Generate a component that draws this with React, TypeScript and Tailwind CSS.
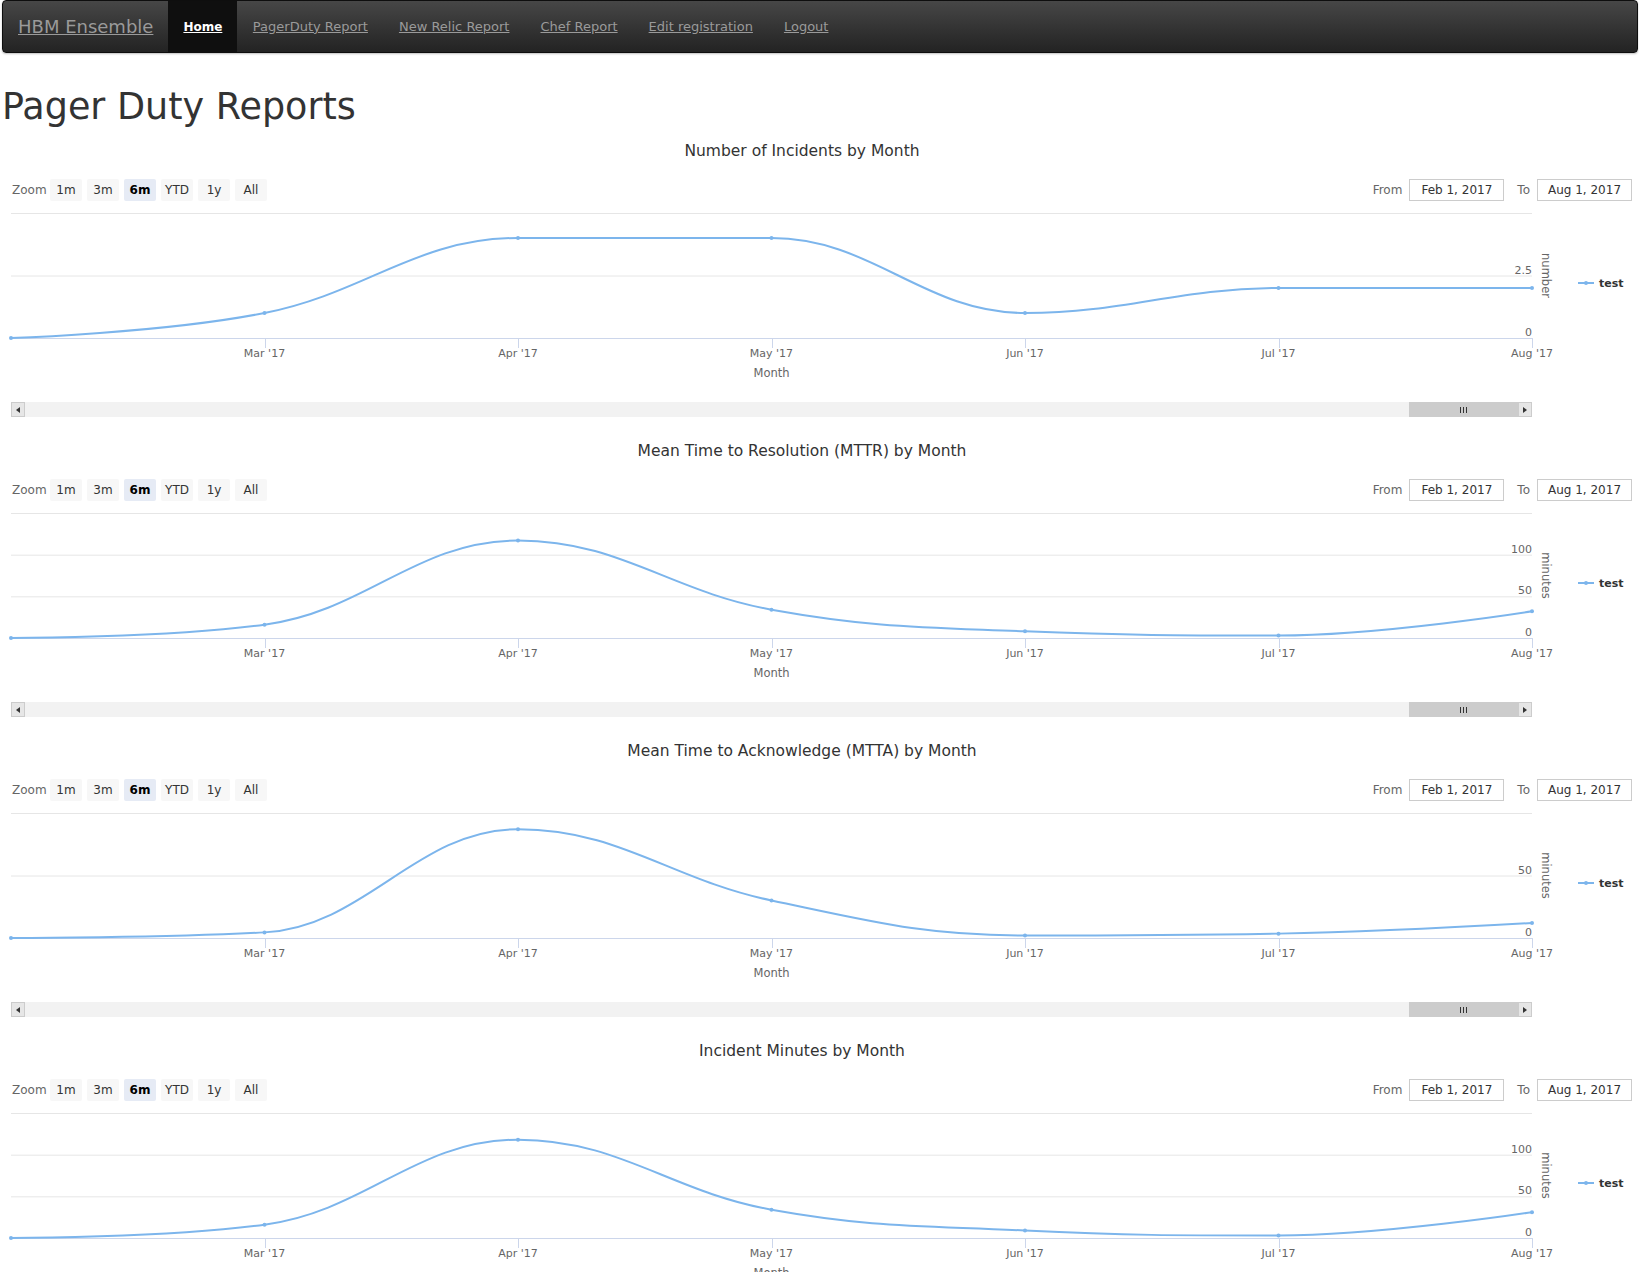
import React from 'react';

type ChartDef = {
  title: string;
  data: number[];
  max: number;
  labels: number[];
  axis: string;
};

const CHARTS: ChartDef[] = [
  { title: 'Number of Incidents by Month', data: [0, 1, 4, 4, 1, 2, 2], max: 5, labels: [0, 2.5], axis: 'number' },
  { title: 'Mean Time to Resolution (MTTR) by Month', data: [0, 16, 117, 34, 8, 3, 32], max: 150, labels: [0, 50, 100], axis: 'minutes' },
  { title: 'Mean Time to Acknowledge (MTTA) by Month', data: [0, 4.5, 87, 30, 2, 3.5, 12], max: 100, labels: [0, 50], axis: 'minutes' },
  { title: 'Incident Minutes by Month', data: [0, 16, 118, 34, 9, 3, 31], max: 150, labels: [0, 50, 100], axis: 'minutes' },
];

const MONTHS = ["Feb '17", "Mar '17", "Apr '17", "May '17", "Jun '17", "Jul '17", "Aug '17"];
const RANGES = ['1m', '3m', '6m', 'YTD', '1y', 'All'];
const NAV_LINKS = ['PagerDuty Report', 'New Relic Report', 'Chef Report', 'Edit registration', 'Logout'];

// plot geometry inside the chart svg
const LEFT = 11;
const RIGHT = 1532;
const TOP = 12;
const BOTTOM = 137;

// highcharts-style spline (smoothing 1.5, no overshoot)
function splinePath(pts: [number, number][]) {
  const s = 1.5;
  const d = s + 1;
  const ctrl = pts.map((p, i) => {
    const prev = pts[i - 1];
    const next = pts[i + 1];
    if (!prev || !next) return null;
    const lx = (s * p[0] + prev[0]) / d;
    let ly = (s * p[1] + prev[1]) / d;
    const rx = (s * p[0] + next[0]) / d;
    let ry = (s * p[1] + next[1]) / d;
    let corr = 0;
    if (rx !== lx) corr = ((ry - ly) * (rx - p[0])) / (rx - lx) + p[1] - ry;
    ly += corr;
    ry += corr;
    if (ly > prev[1] && ly > p[1]) {
      ly = Math.max(prev[1], p[1]);
      ry = 2 * p[1] - ly;
    } else if (ly < prev[1] && ly < p[1]) {
      ly = Math.min(prev[1], p[1]);
      ry = 2 * p[1] - ly;
    }
    if (ry > next[1] && ry > p[1]) {
      ry = Math.max(next[1], p[1]);
      ly = 2 * p[1] - ry;
    } else if (ry < next[1] && ry < p[1]) {
      ry = Math.min(next[1], p[1]);
      ly = 2 * p[1] - ry;
    }
    return { lx, ly, rx, ry };
  });
  let out = `M ${pts[0][0]} ${pts[0][1]}`;
  for (let i = 1; i < pts.length; i++) {
    const a = ctrl[i - 1];
    const b = ctrl[i];
    const c1x = a ? a.rx : pts[i - 1][0];
    const c1y = a ? a.ry : pts[i - 1][1];
    const c2x = b ? b.lx : pts[i][0];
    const c2y = b ? b.ly : pts[i][1];
    out += ` C ${c1x} ${c1y} ${c2x} ${c2y} ${pts[i][0]} ${pts[i][1]}`;
  }
  return out;
}

function Navbar() {
  return (
    <nav className="ml-[2px] mr-px h-[53px] rounded-[4px] border border-[#0e0e0e] bg-gradient-to-b from-[#474747] to-[#232323] flex items-stretch text-[13px] shadow-[0_1px_2px_rgba(0,0,0,0.25)]">
      <a href="#" className="px-[15px] flex items-center text-[18px] text-[#9a9a9a] underline">
        HBM Ensemble
      </a>
      <a href="#" className="px-[15px] flex items-center bg-[#0f0f0f] text-[12px] text-white font-bold underline">
        Home
      </a>
      {NAV_LINKS.map(l => (
        <a key={l} href="#" className="px-[15.5px] flex items-center text-[#9a9a9a] underline">
          {l}
        </a>
      ))}
    </nav>
  );
}

function Scrollbar() {
  return (
    <div className="ml-[11px] w-[1521px] h-[15px] flex bg-[#f2f2f2]">
      <div className="w-[14px] h-full bg-[#e6e6e6] border border-[#cccccc] flex items-center justify-center">
        <svg width="4" height="6" viewBox="0 0 4 6">
          <path d="M4 0 L0 3 L4 6 Z" fill="#333" />
        </svg>
      </div>
      <div className="flex-1" />
      <div className="w-[109px] h-full bg-[#cccccc] flex items-center justify-center gap-[2px]">
        <span className="w-px h-[6px] bg-[#333]" />
        <span className="w-px h-[6px] bg-[#333]" />
        <span className="w-px h-[6px] bg-[#333]" />
      </div>
      <div className="w-[14px] h-full bg-[#e6e6e6] border border-[#cccccc] flex items-center justify-center">
        <svg width="4" height="6" viewBox="0 0 4 6">
          <path d="M0 0 L4 3 L0 6 Z" fill="#333" />
        </svg>
      </div>
    </div>
  );
}

function Chart({ chart }: { chart: ChartDef }) {
  const step = (RIGHT - LEFT) / (chart.data.length - 1);
  const yOf = (v: number) => BOTTOM - (v / chart.max) * (BOTTOM - TOP);
  const pts: [number, number][] = chart.data.map((v, i) => [LEFT + i * step, yOf(v)]);
  const grids = [...chart.labels.filter(v => v !== 0), chart.max];

  return (
    <section className="h-[300px] flex flex-col">
      <h2 className="pt-[11px] w-[1604px] h-[31px] leading-[20px] text-[15.5px] text-[#333] text-center">
        {chart.title}
      </h2>

      <div className="mt-[18px] h-[22px] flex items-center justify-between pl-[12px] pr-[7px]">
        <div className="flex items-center gap-[5px]">
          <span className="w-[33px] text-[12px] text-[#666]">Zoom</span>
          {RANGES.map(r => (
            <button
              key={r}
              className={
                r === '6m'
                  ? 'w-[32px] h-[22px] rounded-[2px] bg-[#e6ebf5] text-[12px] text-black font-bold'
                  : 'w-[32px] h-[22px] rounded-[2px] bg-[#f7f7f7] text-[12px] text-[#333]'
              }
            >
              {r}
            </button>
          ))}
        </div>
        <div className="flex items-center text-[12px]">
          <span className="text-[#666]">From</span>
          <div className="ml-[7px] w-[95px] h-[22px] border border-[#cccccc] flex items-center justify-center text-[#333]">
            Feb 1, 2017
          </div>
          <span className="ml-[13px] text-[#666]">To</span>
          <div className="ml-[7px] w-[95px] h-[22px] border border-[#cccccc] flex items-center justify-center text-[#333]">
            Aug 1, 2017
          </div>
        </div>
      </div>

      <svg width={1639} height={201} className="block" fontFamily="'DejaVu Sans', sans-serif">
        {grids.map(v => (
          <line key={v} x1={LEFT} x2={RIGHT} y1={yOf(v) + 0.5} y2={yOf(v) + 0.5} stroke="#e6e6e6" />
        ))}
        <line x1={LEFT} x2={RIGHT} y1={BOTTOM + 0.5} y2={BOTTOM + 0.5} stroke="#ccd6eb" />
        {MONTHS.map((m, i) =>
          i === 0 ? null : (
            <g key={m}>
              <line
                x1={Math.round(LEFT + i * step) + 0.5}
                x2={Math.round(LEFT + i * step) + 0.5}
                y1={BOTTOM}
                y2={BOTTOM + 10}
                stroke="#ccd6eb"
              />
              <text x={LEFT + i * step} y={156} textAnchor="middle" fontSize={11} fill="#666">
                {m}
              </text>
            </g>
          )
        )}
        <text x={(LEFT + RIGHT) / 2} y={176} textAnchor="middle" fontSize={11.5} fill="#666">
          Month
        </text>

        {chart.labels.map(v => (
          <text key={v} x={RIGHT} y={yOf(v) - 2} textAnchor="end" fontSize={11} fill="#666">
            {v}
          </text>
        ))}
        <text
          transform={`translate(1542 ${(TOP + BOTTOM) / 2}) rotate(90)`}
          textAnchor="middle"
          fontSize={11.5}
          fill="#666"
        >
          {chart.axis}
        </text>

        <path d={splinePath(pts)} fill="none" stroke="#7cb5ec" strokeWidth={2} strokeLinejoin="round" />
        {pts.map((p, i) => (
          <circle key={i} cx={p[0]} cy={p[1]} r={2} fill="#7cb5ec" />
        ))}

        <line x1={1578} x2={1594} y1={82} y2={82} stroke="#7cb5ec" strokeWidth={2} />
        <circle cx={1586} cy={82} r={2} fill="#7cb5ec" />
        <text x={1599} y={86} fontSize={11} fontWeight="bold" fill="#333">
          test
        </text>
      </svg>

      <Scrollbar />
    </section>
  );
}

export default function App() {
  return (
    <div className="min-h-screen bg-white font-['DejaVu_Sans',sans-serif] text-[#333] overflow-hidden">
      <Navbar />
      <div className="h-[77px] pt-[34px] pl-[2px]">
        <h1 className="text-[36.5px] leading-[40px] font-normal text-[#333]">Pager Duty Reports</h1>
      </div>
      {CHARTS.map(c => (
        <Chart key={c.title} chart={c} />
      ))}
    </div>
  );
}
